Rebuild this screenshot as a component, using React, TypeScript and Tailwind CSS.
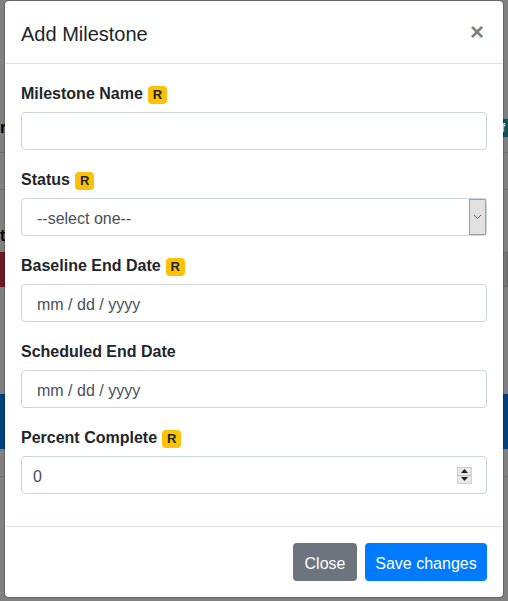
import type { ReactNode } from "react";

function RequiredBadge() {
  return (
    <span className="ml-[5px] inline-block rounded-[4px] bg-[#ffc107] px-[5px] py-[2.5px] align-baseline text-[13px] leading-none font-bold text-[#212529]">
      R
    </span>
  );
}

function Field({
  label,
  required,
  children,
}: {
  label: string;
  required?: boolean;
  children: ReactNode;
}) {
  return (
    <div className="mb-4">
      <label className="mb-2 block h-6 pt-[2px] text-[16px] leading-6 font-bold text-[#212529]">
        {label}
        {required && <RequiredBadge />}
      </label>
      {children}
    </div>
  );
}

function TextBox({ value }: { value?: string }) {
  return (
    <div className="flex h-[38px] items-center rounded-[4px] border border-[#ced4da] bg-white pt-[4px] pr-3 pl-[15px] text-[16px] text-[#495057]">
      {value}
    </div>
  );
}

function SelectBox() {
  return (
    <div className="flex h-[38px] items-stretch rounded-[4px] border border-[#ced4da] bg-white text-[16px] text-[#495057]">
      <div className="flex flex-1 items-center pt-[4px] pl-[15px]">--select one--</div>
      <div className="flex w-[17px] items-center justify-center border border-[#a0a0a0] bg-[#e1e1e1]">
        <svg width="9" height="6" viewBox="0 0 9 6" fill="none">
          <path d="M1 1l3.5 3.5L8 1" stroke="#555" strokeWidth="1" />
        </svg>
      </div>
    </div>
  );
}

function NumberBox() {
  return (
    <div className="flex h-[38px] items-center justify-between rounded-[4px] border border-[#ced4da] bg-white pr-[14px] pl-[11px] text-[16px] text-[#495057]">
      <span className="pt-[4px]">0</span>
      <div className="flex h-[17px] w-[15px] flex-col border border-[#d0d0d0] bg-[#e9e9e9]">
        <div className="flex flex-1 items-center justify-center border-b border-[#c0c0c0]">
          <svg width="7" height="4" viewBox="0 0 7 4">
            <path d="M0 4L3.5 0L7 4z" fill="#222" />
          </svg>
        </div>
        <div className="flex flex-1 items-center justify-center">
          <svg width="7" height="4" viewBox="0 0 7 4">
            <path d="M0 0L3.5 4L7 0z" fill="#222" />
          </svg>
        </div>
      </div>
    </div>
  );
}

function BackgroundPage() {
  return (
    <div className="flex flex-col pt-[119px] text-[16px] font-bold text-black">
      <div className="flex h-[18px] items-center justify-between">
        <span className="leading-none">r</span>
        <div className="flex h-full w-[14px] items-center bg-[#0b525d] pl-[7px] text-[12px] text-white">f</div>
      </div>
      <div className="mt-[15px] h-px bg-[#6f6f6f]" />
      <div className="mt-[36px] h-px bg-[#6f6f6f]" />
      <div className="mt-[38px] h-[14px] leading-none">
        <span>t</span>
      </div>
      <div className="mt-[10px] flex h-[35px] justify-between">
        <div className="w-[20px] bg-[#6e1a22]" />
        <div className="flex w-[20px] items-center border border-[#666] bg-[#777] pl-[1px]">
          <svg width="9" height="6" viewBox="0 0 9 6" fill="none">
            <path d="M1 1l3.5 3.5L8 1" stroke="#333" strokeWidth="1" />
          </svg>
        </div>
      </div>
      <div className="mt-[107px] h-[55px] bg-[#01407f]" />
      <div className="mt-[27px] h-px bg-[#6f6f6f]" />
    </div>
  );
}

export default function App() {
  return (
    <div className="relative h-[601px] w-[508px] overflow-hidden bg-[#808080] font-['Liberation_Sans',Arial,sans-serif]">
      <BackgroundPage />

      <div className="absolute top-0 left-[4px] w-[500px] rounded-[5px] border border-black/20 bg-white bg-clip-padding">
        <div className="flex items-start justify-between border-b border-[#dee2e6] p-4">
          <h5 className="h-[30px] pt-[2px] text-[20px] leading-[30px] font-normal text-[#212529]">Add Milestone</h5>
          <button className="-mr-[1px] h-[30px] px-[4px] text-[24px] leading-[30px] font-bold text-black opacity-50">
            ×
          </button>
        </div>

        <div className="p-4">
          <Field label="Milestone Name" required>
            <TextBox />
          </Field>
          <Field label="Status" required>
            <SelectBox />
          </Field>
          <Field label="Baseline End Date" required>
            <TextBox value="mm / dd / yyyy" />
          </Field>
          <Field label="Scheduled End Date">
            <TextBox value="mm / dd / yyyy" />
          </Field>
          <Field label="Percent Complete" required>
            <NumberBox />
          </Field>
        </div>

        <div className="flex justify-end gap-2 border-t border-[#dee2e6] px-4 py-4">
          <button className="h-[38px] w-[64px] rounded-[4px] bg-[#6c757d] pt-[4px] text-[16px] text-white">Close</button>
          <button className="h-[38px] w-[122px] rounded-[4px] bg-[#007bff] pt-[4px] text-[16px] text-white">Save changes</button>
        </div>
      </div>
    </div>
  );
}
